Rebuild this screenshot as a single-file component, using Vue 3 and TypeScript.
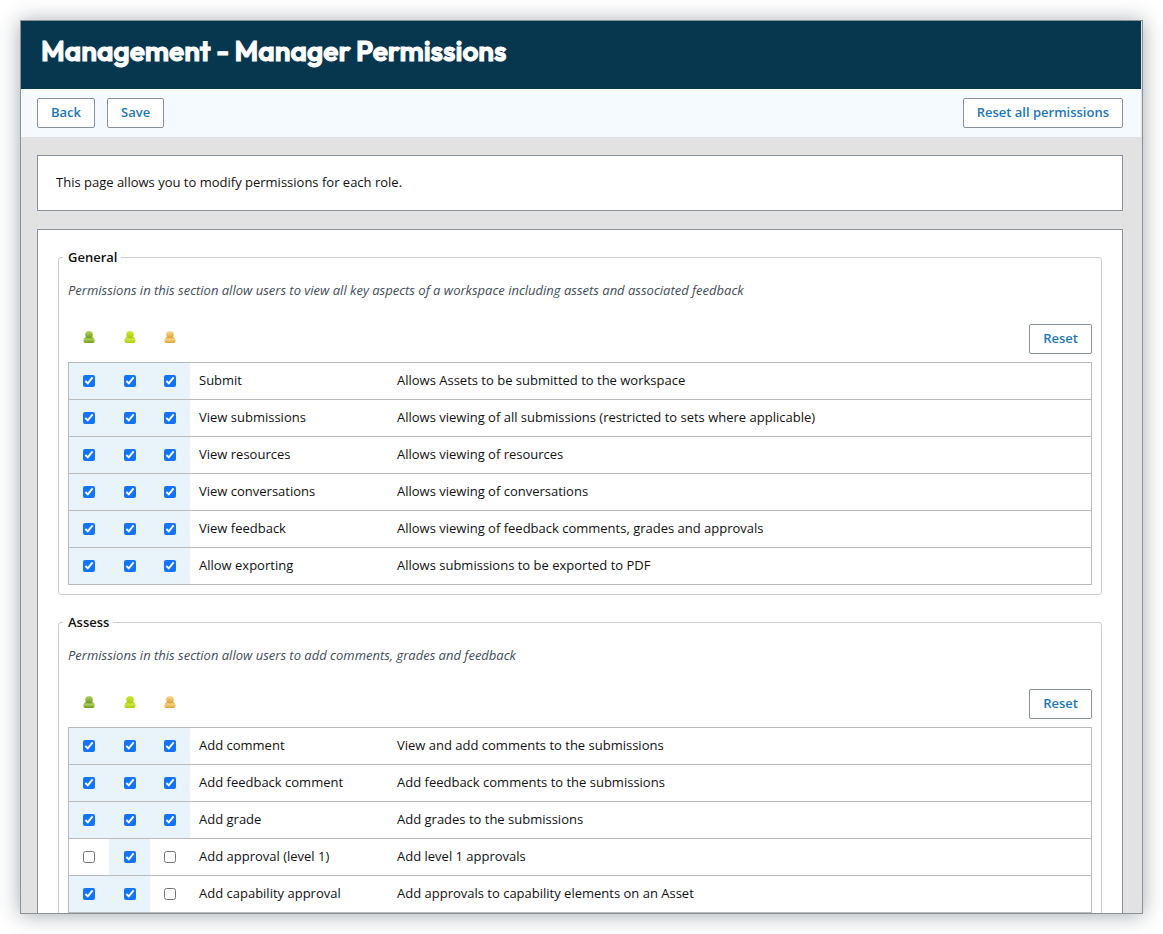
<script setup lang="ts">
import { reactive } from 'vue'

interface Role {
  id: string
  label: string
  light: string
  dark: string
  edge: string
}

interface Permission {
  name: string
  description: string
  granted: boolean[]
}

interface Section {
  title: string
  intro: string
  permissions: Permission[]
}

const roles: Role[] = [
  { id: 'manager', label: 'Role 1', light: '#b4d76a', dark: '#6f9a1c', edge: '#a9cf5c' },
  { id: 'assessor', label: 'Role 2', light: '#d3ea3e', dark: '#a9cc10', edge: '#cfe83c' },
  { id: 'member', label: 'Role 3', light: '#fbdc95', dark: '#dba238', edge: '#f6d17c' },
]

function defaults(): Section[] {
  const all = () => [true, true, true]
  return [
    {
      title: 'General',
      intro: 'Permissions in this section allow users to view all key aspects of a workspace including assets and associated feedback',
      permissions: [
        { name: 'Submit', description: 'Allows Assets to be submitted to the workspace', granted: all() },
        { name: 'View submissions', description: 'Allows viewing of all submissions (restricted to sets where applicable)', granted: all() },
        { name: 'View resources', description: 'Allows viewing of resources', granted: all() },
        { name: 'View conversations', description: 'Allows viewing of conversations', granted: all() },
        { name: 'View feedback', description: 'Allows viewing of feedback comments, grades and approvals', granted: all() },
        { name: 'Allow exporting', description: 'Allows submissions to be exported to PDF', granted: all() },
      ],
    },
    {
      title: 'Assess',
      intro: 'Permissions in this section allow users to add comments, grades and feedback',
      permissions: [
        { name: 'Add comment', description: 'View and add comments to the submissions', granted: all() },
        { name: 'Add feedback comment', description: 'Add feedback comments to the submissions', granted: all() },
        { name: 'Add grade', description: 'Add grades to the submissions', granted: all() },
        { name: 'Add approval (level 1)', description: 'Add level 1 approvals', granted: [false, true, false] },
        { name: 'Add capability approval', description: 'Add approvals to capability elements on an Asset', granted: [true, true, false] },
      ],
    },
  ]
}

const sections = reactive<Section[]>(defaults())

function resetSection(index: number) {
  sections[index] = defaults()[index]
}

function resetAll() {
  sections.forEach((_, i) => resetSection(i))
}
</script>

<template>
  <main class="window">
    <header class="banner">
      <h1>Management - Manager Permissions</h1>
    </header>

    <div class="toolbar">
      <button type="button" class="btn">Back</button>
      <button type="button" class="btn">Save</button>
      <button type="button" class="btn push" @click="resetAll">Reset all permissions</button>
    </div>

    <div class="content">
      <p class="card note">This page allows you to modify permissions for each role.</p>

      <form class="card panel" @submit.prevent>
        <fieldset v-for="(section, s) in sections" :key="section.title">
          <legend>{{ section.title }}</legend>
          <p class="intro">{{ section.intro }}</p>
          <table>
            <thead>
              <tr>
                <th v-for="role in roles" :key="role.id" class="role" scope="col" :aria-label="role.label">
                  <svg class="person" viewBox="0 0 12 12" aria-hidden="true">
                    <defs>
                      <linearGradient :id="`${role.id}-head-${s}`" x1="0" y1="0" x2="0" y2="1">
                        <stop offset="0" :stop-color="role.light" />
                        <stop offset="1" :stop-color="role.dark" />
                      </linearGradient>
                      <linearGradient :id="`${role.id}-body-${s}`" x1="0" y1="0" x2="0" y2="1">
                        <stop offset="0" :stop-color="role.dark" />
                        <stop offset="0.4" :stop-color="role.edge" />
                        <stop offset="1" :stop-color="role.dark" />
                      </linearGradient>
                    </defs>
                    <path
                      d="M3.4 5.8 H8.6 C10.6 6.6 11.6 7.8 11.6 9.4 C11.6 11.2 10.6 12 9 12 H3 C1.4 12 0.4 11.2 0.4 9.4 C0.4 7.8 1.4 6.6 3.4 5.8 Z"
                      :fill="`url(#${role.id}-body-${s})`"
                    />
                    <ellipse cx="6" cy="3.5" rx="3.8" ry="3.5" :fill="`url(#${role.id}-head-${s})`" />
                  </svg>
                </th>
                <th class="name"></th>
                <th class="reset">
                  <button type="button" class="btn" @click="resetSection(s)">Reset</button>
                </th>
              </tr>
            </thead>
            <tbody>
              <tr v-for="permission in section.permissions" :key="permission.name">
                <td
                  v-for="(role, r) in roles"
                  :key="role.id"
                  class="role"
                  :class="{ granted: permission.granted[r] }"
                >
                  <input
                    v-model="permission.granted[r]"
                    type="checkbox"
                    :aria-label="`${permission.name}: ${role.label}`"
                  />
                </td>
                <td class="name">{{ permission.name }}</td>
                <td class="description">{{ permission.description }}</td>
              </tr>
            </tbody>
          </table>
        </fieldset>
      </form>
    </div>
  </main>
</template>

<style>
body {
  margin: 0;
  background: #fff;
}
</style>

<style scoped>
.window {
  box-sizing: border-box;
  height: calc(100vh - 40px);
  margin: 20px;
  overflow: hidden;
  border: 1px solid #8a9297;
  background: #e2e2e2;
  box-shadow: 0 1px 20px rgba(50, 65, 80, 0.45);
  color: #111;
  font-family: "Open Sans", "Noto Sans", sans-serif;
  font-size: 13px;
  line-height: 16px;
}

.banner {
  box-sizing: border-box;
  height: 68px;
  margin-right: 1px;
  padding: 12px 20px;
  background: #07364f;
}

h1 {
  margin: 0;
  color: #fff;
  font-family: Outfit, Lato, sans-serif;
  font-size: 28px;
  font-weight: 600;
  line-height: 36px;
  -webkit-text-stroke: 1px #fff;
}

.toolbar {
  display: flex;
  align-items: center;
  gap: 12px;
  height: 48px;
  margin-right: 1px;
  padding: 0 18px 0 16px;
  background: #f4faff;
}

.push {
  margin-left: auto;
}

.btn {
  box-sizing: border-box;
  height: 30px;
  padding: 0 13px 2px;
  border: 1px solid #89929c;
  border-radius: 2px;
  background: #fff;
  color: #1c77ba;
  font: 600 13px/16px "Open Sans", "Noto Sans", sans-serif;
  cursor: pointer;
}

.content {
  padding: 18px 19px 18px 16px;
}

.card {
  margin: 0 0 18px;
  border: 1px solid #89929c;
  background: #fff;
}

.note {
  padding: 18px 18px 20px;
}

.panel {
  padding: 19px 20px;
}

fieldset {
  min-width: 0;
  margin: 0 0 19px;
  padding: 0 9px 9px;
  border: 1px solid #ccc;
  border-radius: 3px;
}

legend {
  margin-left: -5px;
  padding: 0 4px 0 5px;
  font-weight: 600;
}

.intro {
  margin: 17px 0 26px;
  color: #414d5a;
  font-style: italic;
}

table {
  width: 100%;
  border-spacing: 0;
  table-layout: fixed;
}

th,
td {
  box-sizing: border-box;
  height: 37px;
  padding: 0;
  border-bottom: 1px solid #bbb;
  text-align: left;
}

thead th {
  height: 39px;
  padding-bottom: 8px;
}

td:first-child {
  border-left: 1px solid #bbb;
}

td:last-child {
  border-right: 1px solid #bbb;
}

th.role,
td.role {
  width: 41px;
  text-align: center;
}

th.role:nth-child(3) {
  width: 40px;
}

th.role {
  padding-bottom: 13px;
}

.name {
  width: 207px;
  padding-left: 9px;
}

td.name,
td.description {
  padding-bottom: 2px;
}

th.reset {
  text-align: right;
}

.granted {
  background: #e8f4fa;
}

.person {
  display: block;
  width: 12px;
  height: 12px;
  margin: 0 auto;
}

input {
  display: block;
  width: 12px;
  height: 12px;
  margin: 0 auto;
  accent-color: #1274fb;
}
</style>
